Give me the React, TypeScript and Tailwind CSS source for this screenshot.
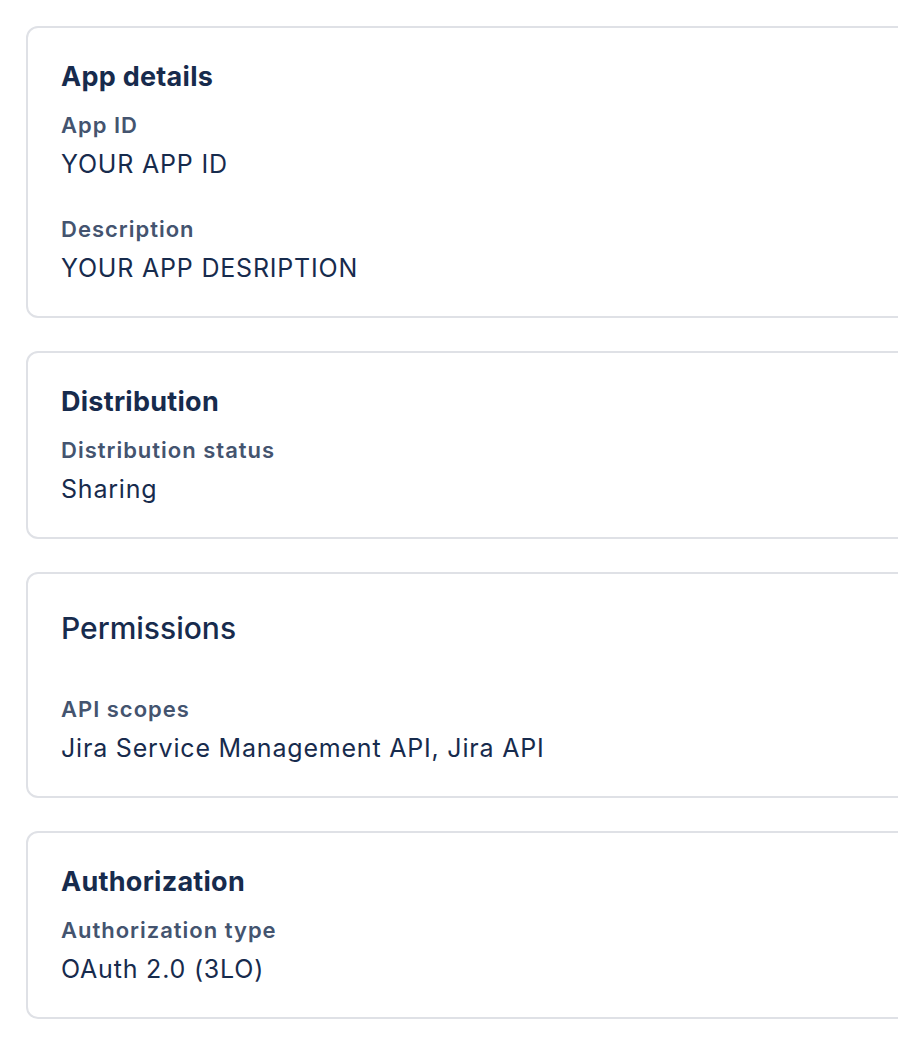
const SECTIONS = [
  {
    title: "App details",
    large: false,
    fields: [
      { label: "App ID", value: "YOUR APP ID" },
      { label: "Description", value: "YOUR APP DESRIPTION" },
    ],
  },
  {
    title: "Distribution",
    large: false,
    fields: [{ label: "Distribution status", value: "Sharing" }],
  },
  {
    title: "Permissions",
    large: true,
    fields: [
      { label: "API scopes", value: "Jira Service Management API, Jira API" },
    ],
  },
  {
    title: "Authorization",
    large: false,
    fields: [{ label: "Authorization type", value: "OAuth 2.0 (3LO)" }],
  },
];

function Field({ label, value, first }: { label: string; value: string; first: boolean }) {
  return (
    <div className={first ? "" : "mt-[37px]"}>
      <div className="text-[22px] leading-[24px] font-semibold tracking-[0.045em] text-[#44546f]">
        {label}
      </div>
      <div className="mt-[11px] text-[25px] leading-[32px] tracking-[0.032em] text-[#172b4d]">
        {value}
      </div>
    </div>
  );
}

function Card({ section }: { section: (typeof SECTIONS)[number] }) {
  return (
    <section className="w-[1000px] rounded-[12px] border-2 border-[#dfe1e6] bg-white px-[33px] pt-[32px] pb-[32px]">
      {section.large ? (
        <h2 className="mb-[47px] text-[30px] leading-[44px] font-medium text-[#172b4d]">
          {section.title}
        </h2>
      ) : (
        <h2 className="mb-[19px] text-[27px] leading-[34px] font-bold tracking-[0.01em] text-[#172b4d]">
          {section.title}
        </h2>
      )}
      {section.fields.map((f, i) => (
        <Field key={f.label} label={f.label} value={f.value} first={i === 0} />
      ))}
    </section>
  );
}

export default function App() {
  return (
    <div
      className="min-h-[1050px] w-[898px] overflow-hidden bg-white pt-[26px] pl-[26px]"
      style={{ fontFamily: "Inter, 'Noto Sans', sans-serif" }}
    >
      <div className="flex flex-col gap-[33px]">
        {SECTIONS.map((s) => (
          <Card key={s.title} section={s} />
        ))}
      </div>
    </div>
  );
}
